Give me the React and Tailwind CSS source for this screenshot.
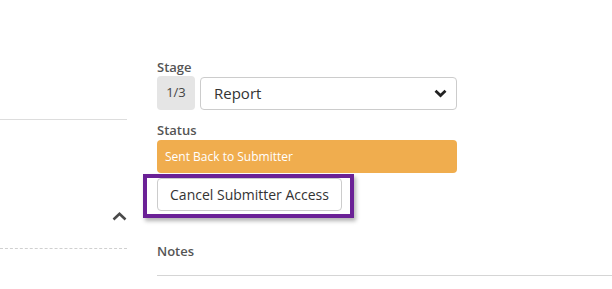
export default function App() {
  return (
    <div className="w-[612px] h-[289px] bg-white overflow-hidden flex" style={{ fontFamily: '"Open Sans", sans-serif' }}>
      <div className="w-[127px] shrink-0 flex flex-col">
        <div className="h-[120px] border-b border-[#dddddd]" />
        <div className="h-[92px]" />
        <div className="flex justify-end">
          <svg width="15" height="9" viewBox="0 0 15 9" className="block">
            <path d="M1.5 7.5 L7.5 1.8 L13.5 7.5" fill="none" stroke="#4a4a4a" strokeWidth="2.6" />
          </svg>
        </div>
        <div className="h-[27px]" />
        <div className="border-t border-dashed border-[#d0d0d0]" />
      </div>
      <div className="ml-[30px] flex-1 flex flex-col pt-[58px]">
        <div className="w-[300px]">
          <div className="text-[13px] leading-[18px] font-semibold text-[#555555]">Stage</div>
          <div className="flex gap-[5px] h-[34px]">
            <div className="w-[38px] bg-[#e5e5e5] rounded-[4px] flex items-center justify-center text-[13px] text-[#444444]">1/3</div>
            <div className="flex-1 mt-[1px] border border-[#cccccc] rounded-[4px] flex items-center justify-between pl-[13px] pr-[9px] text-[15px] text-[#333333]">
              <span>Report</span>
              <svg width="13" height="9" viewBox="0 0 13 9" className="block">
                <path d="M1.5 1.8 L6.5 6.5 L11.5 1.8" fill="none" stroke="#222222" strokeWidth="2.8" />
              </svg>
            </div>
          </div>
          <div className="mt-[11px] text-[13px] leading-[18px] font-semibold text-[#555555]">Status</div>
          <div className="mt-[1px] h-[33px] bg-[#f0ad4e] rounded-[4px] flex items-center pl-[8px] text-[12px] text-white">Sent Back to Submitter</div>
          <div className="relative mt-[5px] h-[34px]">
            <div className="absolute left-[-14px] top-[-4px] w-[211px] h-[44px] border-[4px] border-[#6b2196] shadow-[2px_3px_4px_rgba(0,0,0,0.3)]" />
            <button className="relative w-[185px] h-[33px] border border-[#cccccc] rounded-[4px] bg-white text-[14px] text-[#333333]">Cancel Submitter Access</button>
          </div>
        </div>
        <div className="mt-[30px] text-[13px] leading-[18px] font-semibold text-[#555555]">Notes</div>
        <div className="mt-[15px] border-t border-[#d5d5d5]" />
      </div>
    </div>
  );
}
